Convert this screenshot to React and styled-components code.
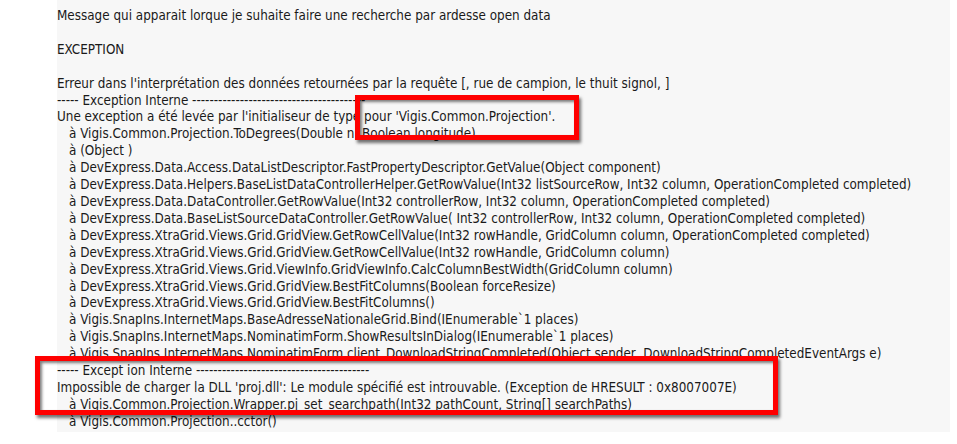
import React from 'react';
import styled, { createGlobalStyle } from 'styled-components';

const GlobalStyle = createGlobalStyle`
  html, body {
    margin: 0;
    padding: 0;
    background: #ffffff;
  }
`;

const Page = styled.div`
  display: flex;
  width: 957px;
  height: 444px;
  background: #ffffff;
  overflow: hidden;
`;

const Gutter = styled.div`
  width: 57px;
  flex-shrink: 0;
`;

const Panel = styled.div`
  position: relative;
  width: 893px;
  height: 432px;
  background: #f7f7f7;
  padding-top: 8px;
  box-sizing: border-box;
  font-family: "DejaVu Sans Condensed", "DejaVu Sans", sans-serif;
  font-size: 13.35px;
  line-height: 16.92px;
  color: #1a1a1a;
`;

const Line = styled.div`
  white-space: pre;
  height: 16.92px;
  padding-left: ${(p) => (p.$indent ? '12px' : '0')};
`;

const Highlight = styled.div`
  position: absolute;
  border: 5px solid #ff0000;
  box-sizing: border-box;
  box-shadow: 2px 3px 3px rgba(0, 0, 0, 0.55), inset 2px 2px 3px rgba(0, 0, 0, 0.5);
  pointer-events: none;
`;

const dashes = '-'.repeat(40);

const lines = [
  { text: 'Message qui apparait lorque je suhaite faire une recherche par ardesse open data' },
  { text: '' },
  { text: 'EXCEPTION' },
  { text: '' },
  { text: "Erreur dans l'interprétation des données retournées par la requête [, rue de campion, le thuit signol, ]" },
  { text: `----- Exception Interne ${dashes}` },
  { text: "Une exception a été levée par l'initialiseur de type pour 'Vigis.Common.Projection'." },
  { text: 'à Vigis.Common.Projection.ToDegrees(Double n, Boolean longitude)', indent: true },
  { text: 'à (Object )', indent: true },
  { text: 'à DevExpress.Data.Access.DataListDescriptor.FastPropertyDescriptor.GetValue(Object component)', indent: true },
  { text: 'à DevExpress.Data.Helpers.BaseListDataControllerHelper.GetRowValue(Int32 listSourceRow, Int32 column, OperationCompleted completed)', indent: true },
  { text: 'à DevExpress.Data.DataController.GetRowValue(Int32 controllerRow, Int32 column, OperationCompleted completed)', indent: true },
  { text: 'à DevExpress.Data.BaseListSourceDataController.GetRowValue( Int32 controllerRow, Int32 column, OperationCompleted completed)', indent: true },
  { text: 'à DevExpress.XtraGrid.Views.Grid.GridView.GetRowCellValue(Int32 rowHandle, GridColumn column, OperationCompleted completed)', indent: true },
  { text: 'à DevExpress.XtraGrid.Views.Grid.GridView.GetRowCellValue(Int32 rowHandle, GridColumn column)', indent: true },
  { text: 'à DevExpress.XtraGrid.Views.Grid.ViewInfo.GridViewInfo.CalcColumnBestWidth(GridColumn column)', indent: true },
  { text: 'à DevExpress.XtraGrid.Views.Grid.GridView.BestFitColumns(Boolean forceResize)', indent: true },
  { text: 'à DevExpress.XtraGrid.Views.Grid.GridView.BestFitColumns()', indent: true },
  { text: 'à Vigis.SnapIns.InternetMaps.BaseAdresseNationaleGrid.Bind(IEnumerable`1 places)', indent: true },
  { text: 'à Vigis.SnapIns.InternetMaps.NominatimForm.ShowResultsInDialog(IEnumerable`1 places)', indent: true },
  { text: 'à Vigis.SnapIns.InternetMaps.NominatimForm.client_DownloadStringCompleted(Object sender, DownloadStringCompletedEventArgs e)', indent: true },
  { text: `----- Except ion Interne ${dashes}` },
  { text: "Impossible de charger la DLL 'proj.dll': Le module spécifié est introuvable. (Exception de HRESULT : 0x8007007E)" },
  { text: 'à Vigis.Common.Projection.Wrapper.pj_set_searchpath(Int32 pathCount, String[] searchPaths)', indent: true },
  { text: 'à Vigis.Common.Projection..cctor()', indent: true },
];

export default function App() {
  return (
    <>
      <GlobalStyle />
      <Page>
        <Gutter />
        <Panel>
          {lines.map((l, i) => (
            <Line key={i} $indent={l.indent}>
              {l.text}
            </Line>
          ))}
          <Highlight style={{ left: 298, top: 95, width: 224, height: 45 }} />
          <Highlight style={{ left: -22, top: 356, width: 743, height: 59 }} />
        </Panel>
      </Page>
    </>
  );
}
